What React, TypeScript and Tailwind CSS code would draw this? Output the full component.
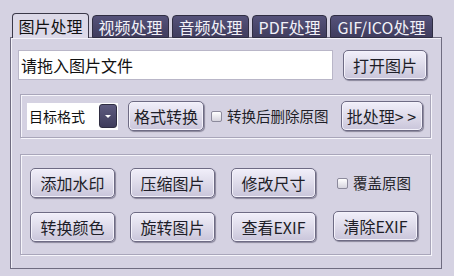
import React, { useState } from 'react';

const font = "font-['Noto_Sans_CJK_SC','Noto_Sans',sans-serif]";

const tabs = [
  { label: '图片处理', w: 'w-[77px]' },
  { label: '视频处理', w: 'w-[77px]' },
  { label: '音频处理', w: 'w-[77px]' },
  { label: 'PDF处理', w: 'w-[75px]' },
  { label: 'GIF/ICO处理', w: 'w-[103px]' },
];

function Btn({ children, w = 'w-[85px]' }: { children: React.ReactNode; w?: string }) {
  return (
    <button
      className={`${w} h-[30px] shrink-0 rounded-[5px] border border-[#6e6b84] bg-gradient-to-b from-[#f1effa] via-[#dedbea] to-[#c9c5da] text-[16px] text-[#1e1e28] shadow-[inset_0_0_0_1px_#f4f2fb,1px_1px_1px_#8a879c] leading-none`}
    >
      {children}
    </button>
  );
}

function Check({ label }: { label: string }) {
  return (
    <label className="flex items-center gap-[5px] text-[14.5px] text-[#1e1e28] whitespace-nowrap">
      <span className="w-[11px] h-[11px] border border-[#8c8a9c] rounded-[2px] bg-gradient-to-b from-[#ffffff] to-[#d6d4de]" />
      {label}
    </label>
  );
}

function Group({ children, className = '' }: { children: React.ReactNode; className?: string }) {
  return (
    <div className={`ml-[9px] w-[411px] border border-[#a9a6ba] shadow-[inset_1px_1px_0_#f6f5fb,1px_1px_0_#f6f5fb] ${className}`}>
      {children}
    </div>
  );
}

export default function App() {
  const [active, setActive] = useState(0);

  return (
    <div className={`w-[454px] h-[276px] bg-[#d5d2e2] pt-[13px] pl-[10px] ${font}`}>
      {/* tab strip */}
      <div className="flex items-end gap-[3px] pl-[2px] h-[25px] relative z-10">
        {tabs.map((t, i) => (
          <button
            key={t.label}
            onClick={() => setActive(i)}
            className={
              i === active
                ? `${t.w} h-[25px] rounded-t-[4px] border border-b-0 border-[#3a3848] bg-[#dcd9e8] text-[16px] text-[#111] leading-none`
                : `${t.w} h-[23px] rounded-t-[4px] border border-[#2f2d42] bg-gradient-to-b from-[#55527a] to-[#403d5e] text-[16px] text-[#f2f1f8] leading-none`
            }
          >
            {t.label}
          </button>
        ))}
      </div>

      {/* panel */}
      <div className="w-[432px] h-[232px] -mt-[1px] border border-[#6f6c80] shadow-[inset_1px_1px_0_#f3f2f9]">
        <div className="flex items-center pt-[12px] pl-[7px]">
          <div className="w-[315px] h-[30px] bg-white border border-[#b9b6c8] flex items-center pl-[2px] text-[16px] text-[#111]">
            请拖入图片文件
          </div>
          <div className="ml-[10px]">
            <Btn w="w-[84px]">打开图片</Btn>
          </div>
        </div>

        <Group className="mt-[14px] h-[44px] flex items-center pl-[6px]">
          <div className="w-[91px] h-[27px] bg-white flex items-center justify-between pl-[2px] pr-[1px] text-[14px] text-[#111]">
            目标格式
            <span className="w-[18px] h-[24px] rounded-[3px] bg-gradient-to-b from-[#5f5c80] to-[#3f3c5c] border border-[#2f2d42] flex items-center justify-center">
              <span className="w-0 h-0 border-l-[3px] border-r-[3px] border-t-[3px] border-l-transparent border-r-transparent border-t-white" />
            </span>
          </div>
          <div className="ml-[10px]">
            <Btn w="w-[76px]">格式转换</Btn>
          </div>
          <div className="ml-[7px]">
            <Check label="转换后删除原图" />
          </div>
          <div className="ml-[12px]">
            <Btn w="w-[82px]">批处理&gt; &gt;</Btn>
          </div>
        </Group>

        <Group className="mt-[16px] h-[101px] pl-[9px] pt-[13px] flex flex-col gap-[14px]">
          <div className="flex items-center">
            <Btn>添加水印</Btn>
            <div className="ml-[15px]"><Btn>压缩图片</Btn></div>
            <div className="ml-[16px]"><Btn>修改尺寸</Btn></div>
            <div className="ml-[21px]"><Check label="覆盖原图" /></div>
          </div>
          <div className="flex items-center">
            <Btn>转换颜色</Btn>
            <div className="ml-[15px]"><Btn>旋转图片</Btn></div>
            <div className="ml-[16px]"><Btn>查看EXIF</Btn></div>
            <div className="ml-[17px] -mt-[2px]"><Btn>清除EXIF</Btn></div>
          </div>
        </Group>
      </div>
    </div>
  );
}
